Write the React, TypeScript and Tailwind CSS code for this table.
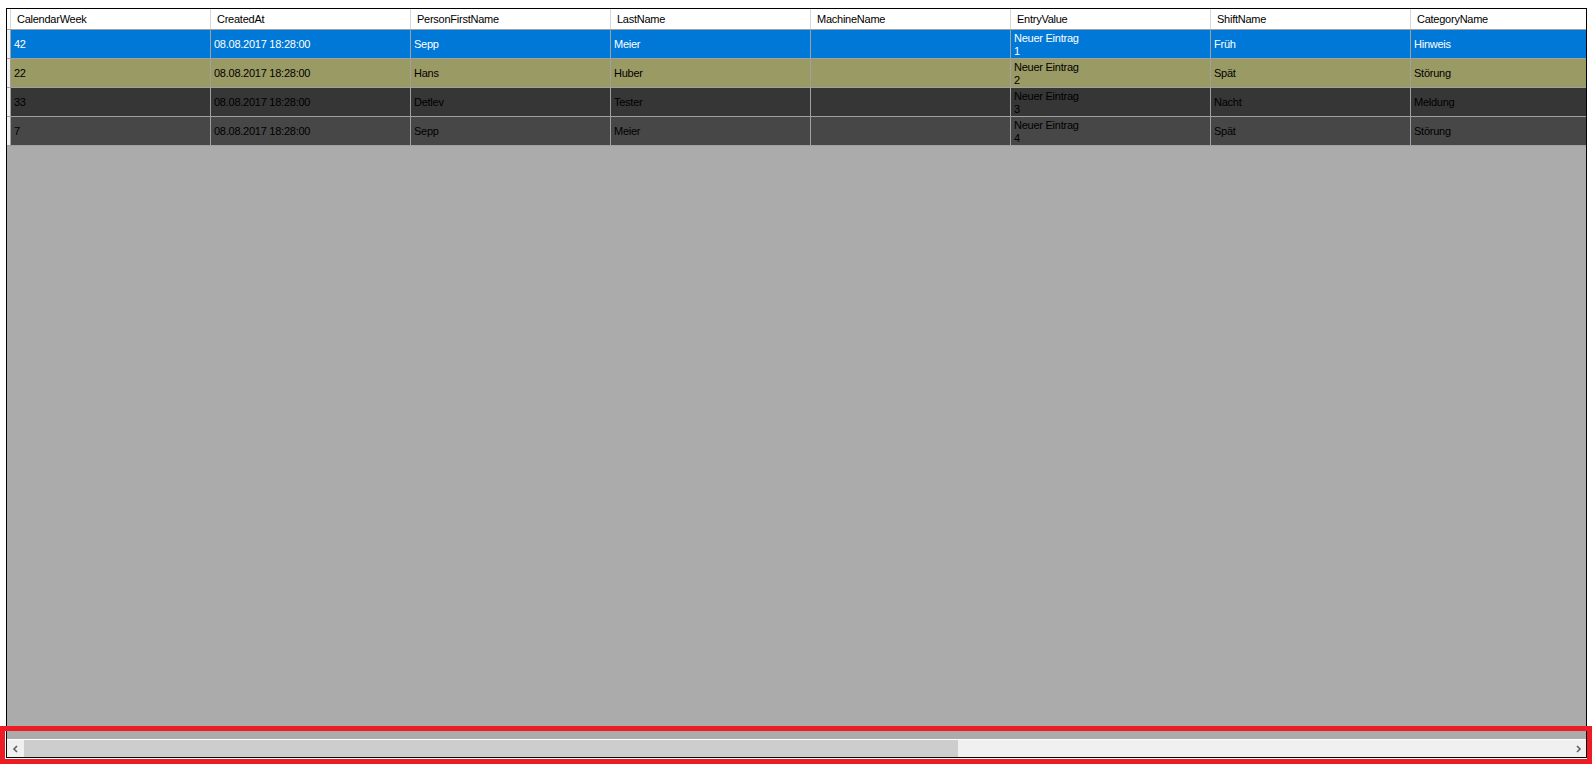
import React from 'react';

const columns = ['CalendarWeek', 'CreatedAt', 'PersonFirstName', 'LastName', 'MachineName', 'EntryValue', 'ShiftName', 'CategoryName'];

type Row = {
  bg: string;
  text: string;
  cells: string[];
  entry: string;
};

const rows: Row[] = [
  { bg: 'bg-[#0078d7]', text: 'text-white', cells: ['42', '08.08.2017 18:28:00', 'Sepp', 'Meier', '', '', 'Früh', 'Hinweis'], entry: '1' },
  { bg: 'bg-[#9a9a64]', text: 'text-black', cells: ['22', '08.08.2017 18:28:00', 'Hans', 'Huber', '', '', 'Spät', 'Störung'], entry: '2' },
  { bg: 'bg-[#363636]', text: 'text-black', cells: ['33', '08.08.2017 18:28:00', 'Detlev', 'Tester', '', '', 'Nacht', 'Meldung'], entry: '3' },
  { bg: 'bg-[#474747]', text: 'text-black', cells: ['7', '08.08.2017 18:28:00', 'Sepp', 'Meier', '', '', 'Spät', 'Störung'], entry: '4' },
];

export default function App() {
  return (
    <div className="relative w-[1592px] h-[764px] bg-white overflow-hidden font-['Liberation_Sans',Arial,sans-serif] text-[11px] tracking-[-0.25px]">
      <div className="ml-[6px] mt-[8px] w-[1581px] h-[750px] border border-black flex flex-col bg-[#ababab] overflow-hidden">
        {/* header */}
        <div className="flex h-[21px] shrink-0 bg-white border-b border-[#a0a0a0]">
          <div className="w-[4px] shrink-0 border-r border-[#d8d8d8]" />
          {columns.map((c) => (
            <div key={c} className="w-[200px] shrink-0 border-r border-[#d8d8d8] pl-[6px] flex items-center text-black">
              {c}
            </div>
          ))}
        </div>

        {/* rows */}
        {rows.map((r, i) => (
          <div key={i} className={`flex h-[29px] shrink-0 border-b border-[#a0a0a0] ${r.text}`}>
            <div className="w-[4px] shrink-0 bg-[#f0f0f0] border-r border-[#a0a0a0]" />
            {r.cells.map((v, j) => (
              <div key={j} className={`w-[200px] shrink-0 border-r border-[#a0a0a0] pl-[3px] flex items-center ${r.bg}`}>
                {j === 5 ? (
                  <div className="leading-[13px] pt-[1px]">
                    <div>Neuer Eintrag</div>
                    <div>{r.entry}</div>
                  </div>
                ) : (
                  v
                )}
              </div>
            ))}
          </div>
        ))}

        <div className="flex-1" />

        {/* horizontal scrollbar */}
        <div className="h-[18px] shrink-0 border-t border-white bg-[#f0f0f0] flex items-center">
          <div className="w-[17px] h-full flex items-center justify-center">
            <svg width="8" height="8" viewBox="0 0 8 8">
              <path d="M5 1 L2 4 L5 7" stroke="#606060" strokeWidth="1.6" fill="none" />
            </svg>
          </div>
          <div className="w-[934px] h-full bg-[#cdcdcd]" />
          <div className="flex-1" />
          <div className="w-[17px] h-full flex items-center justify-center">
            <svg width="8" height="8" viewBox="0 0 8 8">
              <path d="M3 1 L6 4 L3 7" stroke="#606060" strokeWidth="1.6" fill="none" />
            </svg>
          </div>
        </div>
      </div>

      {/* red annotation box */}
      <div className="absolute left-0 top-[726px] w-[1592px] h-[38px] border-[5px] border-[#ed1c24] pointer-events-none" />
    </div>
  );
}
